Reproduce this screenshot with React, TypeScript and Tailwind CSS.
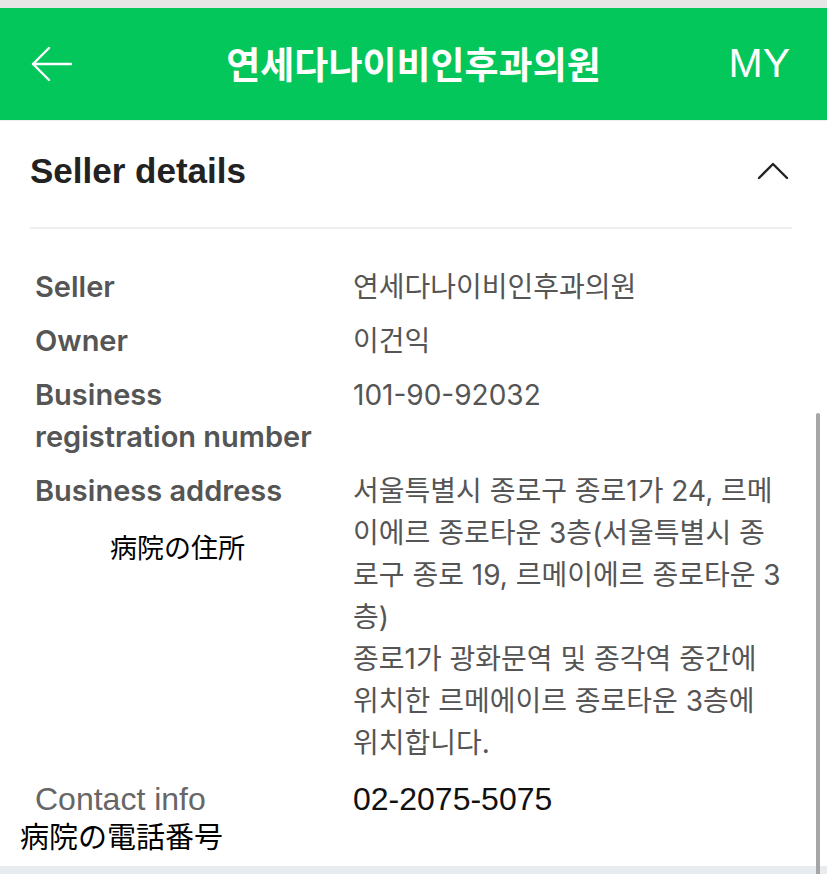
import React from "react";

const sans = { fontFamily: '"Inter", "Noto Sans CJK KR", sans-serif' };

const addressLines = [
  "서울특별시 종로구 종로1가 24, 르메",
  "이에르 종로타운 3층(서울특별시 종",
  "로구 종로 19, 르메이에르 종로타운 3",
  "층)",
  "종로1가 광화문역 및 종각역 중간에",
  "위치한 르메에이르 종로타운 3층에",
  "위치합니다.",
];

function BackArrow() {
  return (
    <svg width="42" height="36" viewBox="0 0 42 36" fill="none" stroke="white" strokeWidth="2.4" strokeLinecap="round" strokeLinejoin="round">
      <path d="M2 18H40" />
      <path d="M18 2L2 18L18 34" />
    </svg>
  );
}

function ChevronUp() {
  return (
    <svg width="32" height="20" viewBox="0 0 32 20" fill="none" stroke="#222" strokeWidth="2.4" strokeLinecap="round" strokeLinejoin="round">
      <path d="M2 17L16 3L30 17" />
    </svg>
  );
}

function Row({ label, children }: { label: React.ReactNode; children: React.ReactNode }) {
  return (
    <div className="grid grid-cols-[323px_1fr]">
      <div className="pl-[5px] text-[29px] leading-[42px] font-semibold text-[#555555]">{label}</div>
      <div className="text-[28px] leading-[42px] text-[#555555]">{children}</div>
    </div>
  );
}

export default function App() {
  return (
    <div className="relative w-[827px] h-[874px] overflow-hidden bg-white flex flex-col" style={sans}>
      <div className="h-[8px] bg-[#e6e6e6]" />

      {/* Header */}
      <div className="h-[113px] bg-[#03c75a] grid grid-cols-[1fr_auto_1fr] items-center border-b border-[#eeeeee]">
        <div className="pl-[31px] flex items-center">
          <BackArrow />
        </div>
        <div
          className="text-white text-[37px] font-semibold"
          style={{ fontFamily: '"Noto Sans CJK KR", sans-serif' }}
        >
          연세다나이비인후과의원
        </div>
        <div
          className="pr-[37px] text-right text-white text-[41px]"
          style={{ fontFamily: '"Liberation Sans", sans-serif' }}
        >
          MY
        </div>
      </div>

      {/* Seller details */}
      <div className="flex-1 pl-[30px] pr-[35px]">
        <div className="h-[100px] flex items-center justify-between">
          <h2
            className="text-[35px] font-bold text-[#222222]"
            style={{ fontFamily: '"Liberation Sans", sans-serif' }}
          >
            Seller details
          </h2>
          <div className="mr-[3px]">
            <ChevronUp />
          </div>
        </div>
        <div className="mt-[6px] border-t-2 border-[#eeeeee]" />

        <div className="pt-[37px] flex flex-col gap-[12px]">
          <Row label="Seller">연세다나이비인후과의원</Row>
          <Row label="Owner">이건익</Row>
          <Row label={<>Business<br />registration number</>}>101-90-92032</Row>
          <Row
            label={
              <>
                <div>Business address</div>
                <div
                  className="mt-[20px] pl-[75px] text-[27px] leading-[30px] font-normal text-black"
                  style={{ fontFamily: '"Noto Sans CJK JP", serif' }}
                >
                  病院の住所
                </div>
              </>
            }
          >
            {addressLines.map((line) => (
              <div key={line} className="whitespace-nowrap">{line}</div>
            ))}
          </Row>

          <div className="grid grid-cols-[323px_1fr] pt-[2px]">
            <div>
              <div
                className="pl-[5px] text-[32px] leading-[42px] text-[#666666]"
                style={{ fontFamily: '"Liberation Sans", sans-serif' }}
              >
                Contact info
              </div>
              <div
                className="-ml-[10px] text-[29px] leading-[30px] text-black"
                style={{ fontFamily: '"Noto Sans CJK JP", serif' }}
              >
                病院の電話番号
              </div>
            </div>
            <div
              className="text-[32px] leading-[42px] text-[#111111]"
              style={{ fontFamily: '"Liberation Sans", sans-serif' }}
            >
              02-2075-5075
            </div>
          </div>
        </div>
      </div>

      <div className="h-[8px] bg-[#e9ecef]" />

      {/* scrollbar */}
      <div className="absolute right-[7px] top-[413px] bottom-0 w-[4px] rounded-t-full bg-[#a6a6a6]" />
    </div>
  );
}
